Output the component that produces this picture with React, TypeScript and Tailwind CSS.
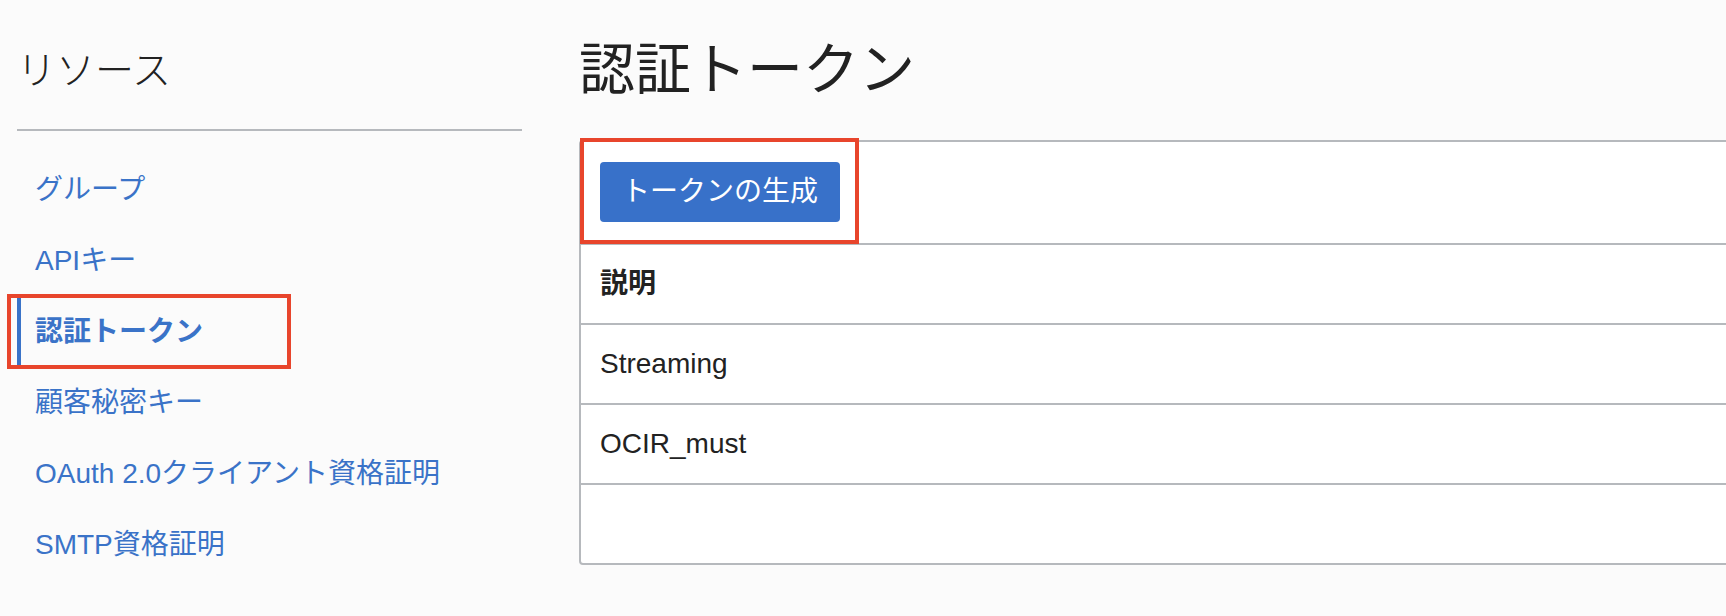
const NAV_ITEMS = [
  { label: 'グループ' },
  { label: 'APIキー' },
  { label: '認証トークン', active: true },
  { label: '顧客秘密キー' },
  { label: 'OAuth 2.0クライアント資格証明' },
  { label: 'SMTP資格証明' },
]

const ROWS = ['Streaming', 'OCIR_must', '']

export default function App() {
  return (
    <div className="flex h-[616px] w-full overflow-hidden bg-[#fbfbfb] font-['Liberation_Sans','Noto_Sans_CJK_JP',sans-serif] text-[#222222]">
      {/* Sidebar */}
      <aside className="w-[522px] shrink-0 pl-[17px]">
        <h2 className="mt-[51px] text-[39px] font-light leading-[40px]">リソース</h2>
        <div className="mt-[38px] h-[2px] bg-[#b6b9bd]" />
        <nav className="mt-[23px] flex flex-col">
          {NAV_ITEMS.map((item) =>
            item.active ? (
              <div key={item.label} className="relative flex h-[71px] items-center">
                <div className="flex h-[67px] w-full items-center border-l-4 border-[#3a73c8] pl-[14px] text-[28px] font-bold text-[#3a73c8]">
                  {item.label}
                </div>
                {/* annotation box */}
                <div className="pointer-events-none absolute -left-[10px] -top-[2px] h-[75px] w-[284px] border-4 border-[#e8452c]" />
              </div>
            ) : (
              <a key={item.label} href="#" className="flex h-[71px] items-center pl-[18px] text-[28px] text-[#3a73c8]">
                {item.label}
              </a>
            )
          )}
        </nav>
      </aside>

      {/* Main */}
      <main className="min-w-0 flex-1 pl-[57px]">
        <h1 className="mt-[42px] text-[56px] font-normal leading-[56px]">認証トークン</h1>
        <div className="mt-[42px] w-[1200px] rounded-[4px] border-2 border-[#b6b9bd] bg-white">
          <div className="relative px-[19px] pt-[20px] pb-[21px]">
            <button className="flex h-[60px] w-[240px] items-center justify-center rounded-[4px] bg-[#3871c9] text-[28px] text-white">
              トークンの生成
            </button>
            {/* annotation box */}
            <div className="pointer-events-none absolute -left-[1px] -top-[4px] h-[106px] w-[279px] border-4 border-[#e8452c]" />
          </div>
          <div className="flex h-[80px] items-center border-t-2 border-[#b6b9bd] pl-[19px] text-[28px] font-bold">
            説明
          </div>
          {ROWS.map((row, i) => (
            <div key={i} className="flex h-[80px] items-center border-t-2 border-[#b6b9bd] pl-[19px] text-[28px]">
              {row}
            </div>
          ))}
        </div>
      </main>
    </div>
  )
}
